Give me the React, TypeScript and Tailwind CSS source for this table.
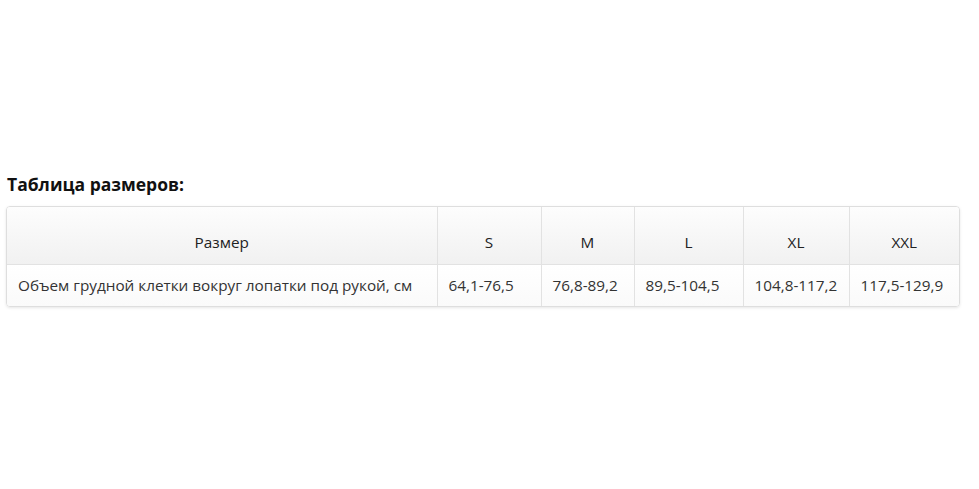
import React from "react";

const sizes = [
  { h: "S", v: "64,1-76,5", w: "w-[104px]" },
  { h: "M", v: "76,8-89,2", w: "w-[93px]" },
  { h: "L", v: "89,5-104,5", w: "w-[109px]" },
  { h: "XL", v: "104,8-117,2", w: "w-[106px]" },
  { h: "XXL", v: "117,5-129,9", w: "w-[110px]" },
];

export default function App() {
  return (
    <div className="min-h-[489px] w-[979px] bg-white pt-[171px] px-[6px] font-['Open_Sans',sans-serif]">
      <h2 className="text-[17.5px] leading-[26px] font-bold text-[#111] pl-px">Таблица размеров:</h2>
      <div className="mt-[9px] w-[954px] rounded-[4px] border border-[#dedede] shadow-[0_1px_3px_rgba(0,0,0,0.10)] overflow-hidden">
        <table className="w-full table-fixed border-collapse text-[15.3px] text-[#333]">
          <colgroup>
            <col className="w-[430px]" />
            {sizes.map((s) => (
              <col key={s.h} className={s.w} />
            ))}
          </colgroup>
          <thead>
            <tr className="h-[57px] bg-gradient-to-b from-[#fdfdfd] to-[#f1f1f1]">
              <th className="font-normal text-[#222] text-center align-middle pt-[14px] border-b border-[#e2e2e2]">Размер</th>
              {sizes.map((s) => (
                <th key={s.h} className="font-normal text-[#222] text-center align-middle pt-[14px] border-l border-b border-[#e2e2e2]">
                  {s.h}
                </th>
              ))}
            </tr>
          </thead>
          <tbody>
            <tr className="h-[42px] bg-gradient-to-b from-white to-[#fafafa]">
              <td className="pl-[11px] align-middle whitespace-nowrap">Объем грудной клетки вокруг лопатки под рукой, см</td>
              {sizes.map((s) => (
                <td key={s.h} className="pl-[11px] align-middle whitespace-nowrap border-l border-[#e2e2e2]">
                  {s.v}
                </td>
              ))}
            </tr>
          </tbody>
        </table>
      </div>
    </div>
  );
}
